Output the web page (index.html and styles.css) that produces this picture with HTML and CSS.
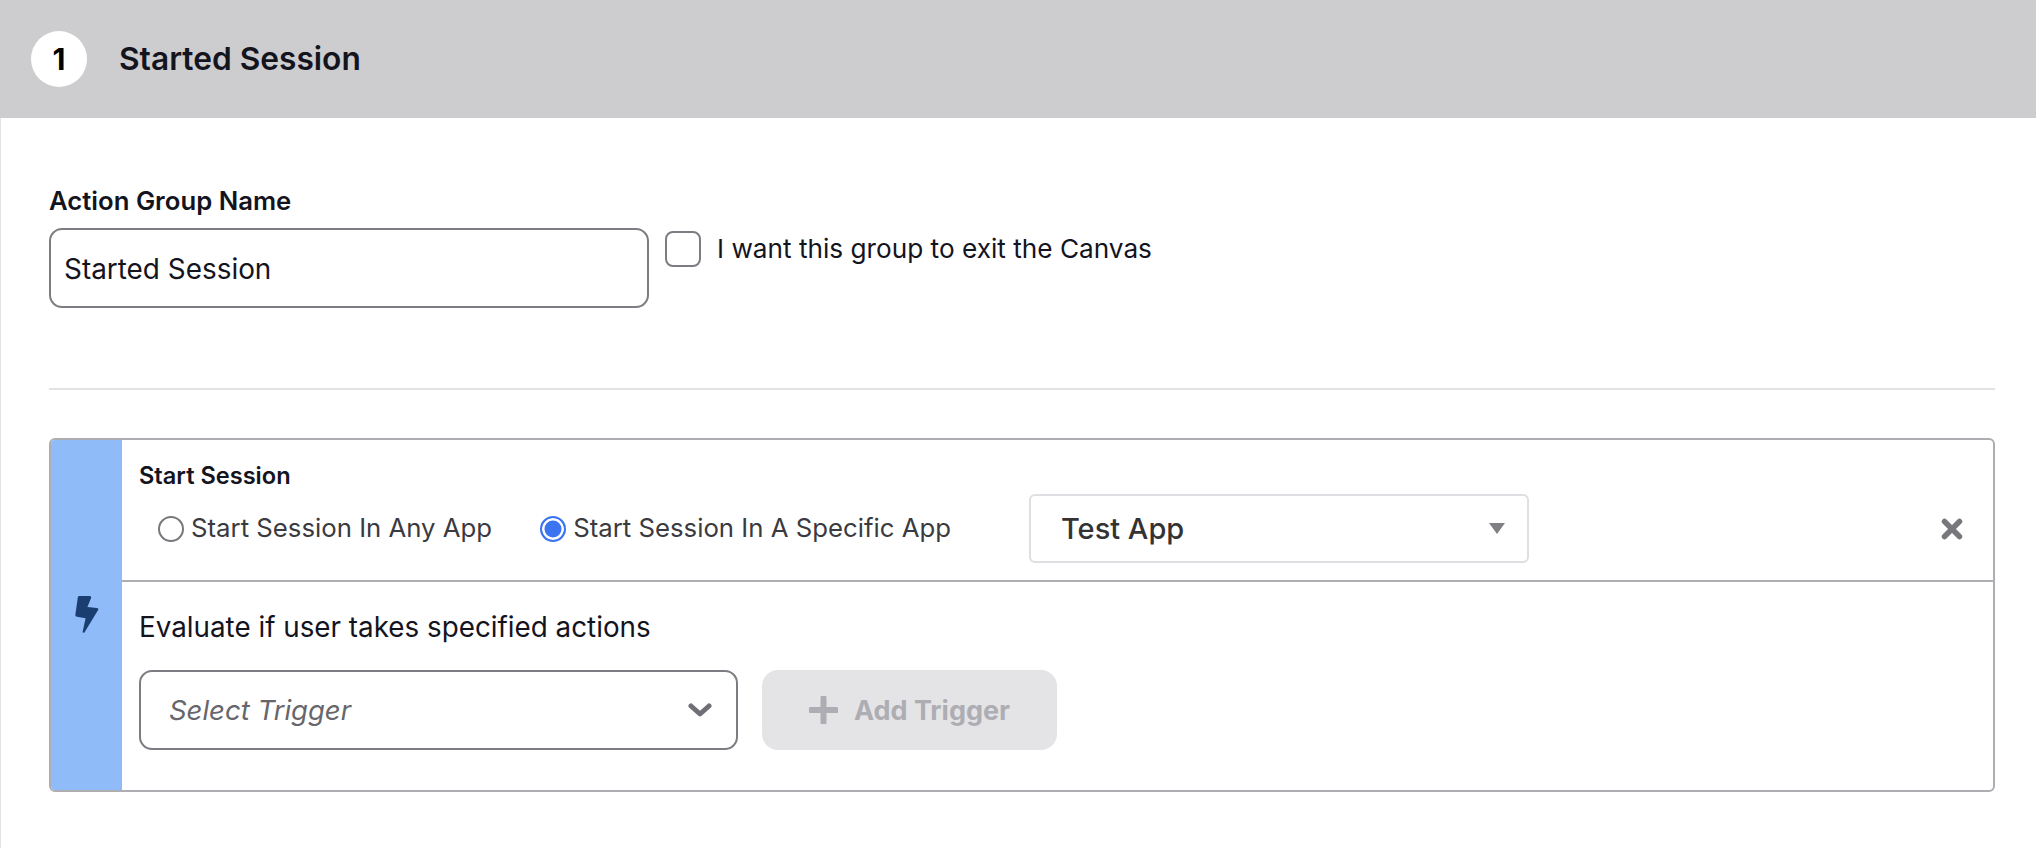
FILE: index.html
```html
<!DOCTYPE html>
<html lang="en">
<head>
  <meta charset="UTF-8">
  <meta name="viewport" content="width=device-width, initial-scale=1.0">
  <title>Started Session</title>
  <link rel="stylesheet" href="styles.css">
</head>
<body>

  <div class="header">
    <div class="step-number">1</div>
    <div class="step-title">Started Session</div>
  </div>

  <div class="content">
    <label class="field-label" for="groupName">Action Group Name</label>
    <div class="name-row">
      <input type="text" class="name-input" id="groupName" value="Started Session">
      <input type="checkbox" class="exit-check" id="exitCanvas">
      <label class="exit-label" for="exitCanvas">I want this group to exit the Canvas</label>
    </div>

    <div class="divider"></div>

    <div class="panel">
      <div class="panel-side">
        <svg class="bolt" width="24" height="37" viewBox="0 0 24 37">
          <path d="M4.5 0H14.5C15.8 0 16.4 .9 16.1 2L12.4 11 22 12C23.2 12.2 23.6 13 23.1 14L9.6 36.2C8.900 37.300 7.400 36.900 7.700 35.600L10.600 22.300 2 20.800C.8 20.600 .2 19.800 .4 18.600L2.800 1.400C3 .5 3.600 0 4.500 0Z" fill="#1a3e70"/>
        </svg>
      </div>
      <div class="panel-body">
        <div class="panel-top">
          <div class="panel-heading">Start Session</div>
          <div class="session-row">
            <label class="radio-item">
              <input type="radio" class="radio" name="app">
              Start Session In Any App
            </label>
            <label class="radio-item">
              <input type="radio" class="radio" name="app" checked>
              Start Session In A Specific App
            </label>
            <div class="app-select">
              <span>Test App</span>
              <svg width="16" height="11" viewBox="0 0 16 11"><path d="M0 0H16L8 11Z" fill="#808084"/></svg>
            </div>
            <svg class="close-icon" width="22" height="22" viewBox="0 0 22 22">
              <path d="M3.500 3.500L18.500 18.500M18.500 3.500L3.500 18.500" stroke="#77777c" stroke-width="5.500" stroke-linecap="round"/>
            </svg>
          </div>
        </div>
        <div class="panel-bottom">
          <div class="evaluate-text">Evaluate if user takes specified actions</div>
          <div class="trigger-row">
            <div class="trigger-select">
              <span>Select Trigger</span>
              <svg width="24" height="14" viewBox="0 0 24 14"><path d="M3 3L12 11L21 3" fill="none" stroke="#6f6f75" stroke-width="5" stroke-linecap="round" stroke-linejoin="round"/></svg>
            </div>
            <button class="add-trigger" disabled>
              <svg width="29" height="28" viewBox="0 0 29 28"><path d="M14.500 2V26M2 14H27" stroke="#adadb3" stroke-width="6" stroke-linecap="round"/></svg>
              Add Trigger
            </button>
          </div>
        </div>
      </div>
    </div>
  </div>

</body>
</html>
```

FILE: styles.css
```css
body {
  margin: 0;
  font-family: Inter, "Liberation Sans", sans-serif;
  color: #14141e;
  background-color: #fff;
}

.header {
  display: flex;
  align-items: center;
  height: 118px;
  padding-left: 31px;
  gap: 32px;
  background-color: #cdcdcf;
}

.step-number {
  display: flex;
  align-items: center;
  justify-content: center;
  width: 56px;
  height: 56px;
  border-radius: 50%;
  background-color: #fff;
  color: #000;
  font-size: 30px;
  font-weight: 700;
}

.step-title {
  font-size: 31.7px;
  font-weight: 600;
  margin-bottom: 2px;
}

.content {
  height: 730px;
  box-sizing: border-box;
  padding: 69px 41px 0 48px;
  border-left: 1px solid #e4e4e6;
}

.field-label {
  display: block;
  font-size: 25.7px;
  font-weight: 600;
  line-height: 28px;
  margin-bottom: 13px;
}

.name-row {
  display: flex;
  align-items: flex-start;
}

.name-input {
  box-sizing: border-box;
  width: 600px;
  height: 80px;
  padding: 2px 13px 0;
  border: 2px solid #7c7c82;
  border-radius: 13px;
  font-family: inherit;
  font-size: 27.9px;
  color: #14141e;
  outline: none;
}

.exit-check {
  appearance: none;
  box-sizing: border-box;
  width: 36px;
  height: 36px;
  margin: 3px 16px 0 16px;
  border: 2px solid #7c7c82;
  border-radius: 8px;
  background-color: #fff;
}

.exit-label {
  font-size: 26.2px;
  line-height: 40px;
  margin-top: 1px;
}

.divider {
  height: 2px;
  margin: 80px 0 48px;
  background-color: #e3e3e5;
}

.panel {
  display: flex;
  box-sizing: border-box;
  height: 354px;
  border: 2px solid #adadb2;
  border-radius: 6px;
  overflow: hidden;
}

.panel-side {
  display: flex;
  align-items: center;
  justify-content: center;
  box-sizing: border-box;
  width: 71px;
  padding-bottom: 2px;
  background-color: #8fbbf9;
}

.panel-body {
  flex: 1;
  display: flex;
  flex-direction: column;
}

.panel-top {
  height: 142px;
  box-sizing: border-box;
  padding: 24px 30px 0 17px;
  border-bottom: 2px solid #adadb2;
}

.panel-heading {
  font-size: 23.6px;
  font-weight: 600;
  line-height: 24px;
}

.session-row {
  display: flex;
  align-items: center;
  margin-top: 6px;
  padding-left: 19px;
}

.radio-item {
  display: flex;
  align-items: center;
  gap: 7px;
  margin: 0 48px 2px 0;
  font-size: 25.75px;
  line-height: 32px;
  color: #3a3a40;
}

.radio {
  appearance: none;
  box-sizing: border-box;
  width: 26px;
  height: 26px;
  margin: 2px 0 0;
  border: 2px solid #77777c;
  border-radius: 50%;
  background-color: #fff;
}

.radio:checked {
  border-color: #3b74f0;
  background-color: #3b74f0;
  box-shadow: inset 0 0 0 2.5px #fff;
}

.app-select {
  display: flex;
  align-items: center;
  justify-content: space-between;
  box-sizing: border-box;
  width: 500px;
  height: 69px;
  margin-left: 30px;
  padding: 0 22px 0 30px;
  border: 2px solid #dfdfe3;
  border-radius: 6px;
  font-size: 29px;
  font-weight: 500;
  color: #333;
}

.close-icon {
  margin-left: auto;
}

.evaluate-text {
  font-size: 27.8px;
  line-height: 32px;
  margin: 29px 0 27px 17px;
}

.trigger-row {
  display: flex;
  align-items: flex-start;
  margin-left: 17px;
  gap: 24px;
}

.trigger-select {
  display: flex;
  align-items: center;
  justify-content: space-between;
  box-sizing: border-box;
  width: 599px;
  height: 80px;
  padding: 0 24px 0 28px;
  border: 2px solid #7c7c82;
  border-radius: 13px;
  font-size: 27.5px;
  font-style: italic;
  color: #66666c;
}

.add-trigger {
  display: flex;
  align-items: center;
  justify-content: center;
  gap: 16px;
  width: 295px;
  height: 80px;
  border: none;
  border-radius: 16px;
  background-color: #e4e4e6;
  color: #adadb3;
  font-family: inherit;
  font-size: 27px;
  font-weight: 700;
}
```
